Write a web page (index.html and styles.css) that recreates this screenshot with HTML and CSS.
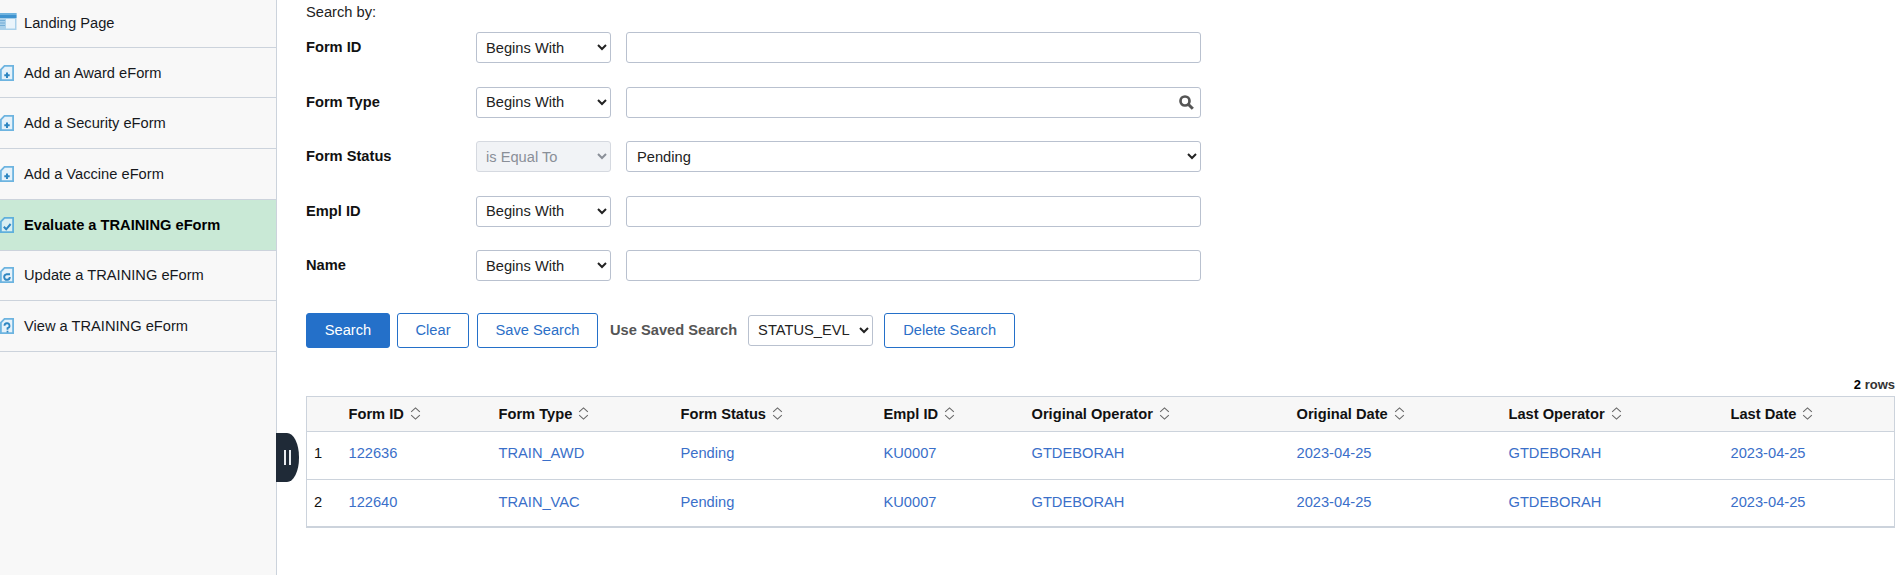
FILE: index.html
```html
<!DOCTYPE html>
<html lang="en">
<head>
<meta charset="utf-8">
<title>Evaluate a TRAINING eForm</title>
<link rel="stylesheet" href="styles.css">
</head>
<body>
<div class="page">
  <nav class="side">
    <a class="nav first"><svg class="ico land" viewBox="0 0 17 17"><rect x="0" y="0" width="16.500" height="17" fill="#a9d0ea"/><rect x="0" y="0" width="16.500" height="2" fill="#6fb3df"/><rect x="0" y="2" width="16.500" height="3" fill="#3f93cf"/><rect x="6" y="6" width="9" height="9.500" fill="#eaf4fb"/><path d="M0 7.500h5M0 10h5M0 12.500h5" stroke="#74add6"/></svg><span>Landing Page</span></a>
    <a class="nav"><svg class="ico" viewBox="0 0 14 16"><path d="M4.500 .9h8.600v14.200H.9V4.500z" fill="#e6f2fa" stroke="#6db4e0" stroke-width="1.800"/><path d="M7 7.500v5.500M4.300 10.300h5.400" stroke="#2e86c1" stroke-width="2"/></svg><span>Add an Award eForm</span></a>
    <a class="nav"><svg class="ico" viewBox="0 0 14 16"><path d="M4.500 .9h8.600v14.200H.9V4.500z" fill="#e6f2fa" stroke="#6db4e0" stroke-width="1.800"/><path d="M7 7.500v5.500M4.300 10.300h5.400" stroke="#2e86c1" stroke-width="2"/></svg><span>Add a Security eForm</span></a>
    <a class="nav"><svg class="ico" viewBox="0 0 14 16"><path d="M4.500 .9h8.600v14.200H.9V4.500z" fill="#e6f2fa" stroke="#6db4e0" stroke-width="1.800"/><path d="M7 7.500v5.500M4.300 10.300h5.400" stroke="#2e86c1" stroke-width="2"/></svg><span>Add a Vaccine eForm</span></a>
    <a class="nav active"><svg class="ico" viewBox="0 0 14 16"><path d="M4.500 .9h8.600v14.200H.9V4.500z" fill="#d8eff2" stroke="#5fb0dc" stroke-width="1.800"/><path d="M3.800 9.800l2.400 2.500 4.400-5.300" fill="none" stroke="#2e86c1" stroke-width="2"/></svg><span>Evaluate a TRAINING eForm</span></a>
    <a class="nav"><svg class="ico" viewBox="0 0 14 16"><path d="M4.500 .9h8.600v14.200H.9V4.500z" fill="#e6f2fa" stroke="#6db4e0" stroke-width="1.800"/><path d="M10 7.300H6.300a2.800 2.800 0 1 0 3.500 2.700" fill="none" stroke="#2e86c1" stroke-width="1.900"/></svg><span>Update a TRAINING eForm</span></a>
    <a class="nav"><svg class="ico" viewBox="0 0 14 16"><path d="M4.500 .9h8.600v14.200H.9V4.500z" fill="#e6f2fa" stroke="#6db4e0" stroke-width="1.800"/><path d="M4.500 7.800a2.500 2.500 0 1 1 3 2.400v1.500M7.500 12.800v1.700" fill="none" stroke="#2e86c1" stroke-width="1.800"/></svg><span>View a TRAINING eForm</span></a>
    <button class="handle" type="button" aria-label="Collapse"><i></i><i></i></button>
  </nav>
  <main class="main">
    <div class="search-by">Search by:</div>
    <div class="form">
      <label class="lbl">Form ID</label>
      <select class="sel"><option>Begins With</option></select>
      <input class="field" type="text">
      <label class="lbl">Form Type</label>
      <select class="sel"><option>Begins With</option></select>
      <div class="lookup"><input class="field" type="text"><svg class="mag" viewBox="0 0 15 15"><circle cx="6" cy="6" r="4.500" fill="none" stroke="#555" stroke-width="2.700"/><path d="M9.500 9.500l4.300 4.300" stroke="#555" stroke-width="3"/></svg></div>
      <label class="lbl">Form Status</label>
      <select class="sel" disabled><option>is Equal To</option></select>
      <select class="field"><option>Pending</option></select>
      <label class="lbl">Empl ID</label>
      <select class="sel"><option>Begins With</option></select>
      <input class="field" type="text">
      <label class="lbl">Name</label>
      <select class="sel"><option>Begins With</option></select>
      <input class="field" type="text">
    </div>
    <div class="actions">
      <button class="btn primary" type="button">Search</button>
      <button class="btn clear" type="button">Clear</button>
      <button class="btn save" type="button">Save Search</button>
      <span class="use">Use Saved Search</span>
      <select class="saved"><option>STATUS_EVL</option></select>
      <button class="btn del" type="button">Delete Search</button>
    </div>
    <div class="count"><b>2</b> rows</div>
    <table class="grid">
      <colgroup><col class="c0"><col class="c1"><col class="c2"><col class="c3"><col class="c4"><col class="c5"><col class="c6"><col class="c7"><col></colgroup>
      <thead>
        <tr>
          <th></th>
          <th>Form ID<svg class="sort" viewBox="0 0 10 12"><path d="M1 4.500L5 .8l4 3.700M1 7.500l4 3.700 4-3.700" fill="none" stroke="#666"/></svg></th>
          <th>Form Type<svg class="sort" viewBox="0 0 10 12"><path d="M1 4.500L5 .8l4 3.700M1 7.500l4 3.700 4-3.700" fill="none" stroke="#666"/></svg></th>
          <th>Form Status<svg class="sort" viewBox="0 0 10 12"><path d="M1 4.500L5 .8l4 3.700M1 7.500l4 3.700 4-3.700" fill="none" stroke="#666"/></svg></th>
          <th>Empl ID<svg class="sort" viewBox="0 0 10 12"><path d="M1 4.500L5 .8l4 3.700M1 7.500l4 3.700 4-3.700" fill="none" stroke="#666"/></svg></th>
          <th>Original Operator<svg class="sort" viewBox="0 0 10 12"><path d="M1 4.500L5 .8l4 3.700M1 7.500l4 3.700 4-3.700" fill="none" stroke="#666"/></svg></th>
          <th>Original Date<svg class="sort" viewBox="0 0 10 12"><path d="M1 4.500L5 .8l4 3.700M1 7.500l4 3.700 4-3.700" fill="none" stroke="#666"/></svg></th>
          <th>Last Operator<svg class="sort" viewBox="0 0 10 12"><path d="M1 4.500L5 .8l4 3.700M1 7.500l4 3.700 4-3.700" fill="none" stroke="#666"/></svg></th>
          <th>Last Date<svg class="sort" viewBox="0 0 10 12"><path d="M1 4.500L5 .8l4 3.700M1 7.500l4 3.700 4-3.700" fill="none" stroke="#666"/></svg></th>
        </tr>
      </thead>
      <tbody>
        <tr><td class="idx">1</td><td><a>122636</a></td><td><a>TRAIN_AWD</a></td><td><a>Pending</a></td><td><a>KU0007</a></td><td><a>GTDEBORAH</a></td><td><a>2023-04-25</a></td><td><a>GTDEBORAH</a></td><td><a>2023-04-25</a></td></tr>
        <tr><td class="idx">2</td><td><a>122640</a></td><td><a>TRAIN_VAC</a></td><td><a>Pending</a></td><td><a>KU0007</a></td><td><a>GTDEBORAH</a></td><td><a>2023-04-25</a></td><td><a>GTDEBORAH</a></td><td><a>2023-04-25</a></td></tr>
      </tbody>
    </table>
  </main>
</div>
</body>
</html>
```

FILE: styles.css
```css
* { box-sizing: border-box; }
html, body { margin: 0; height: 100%; overflow: hidden; background: #fff; }
body { font-family: "Liberation Sans", Arial, sans-serif; font-size: 14.670px; color: #111; }
.page { display: flex; height: 575px; width: 1895px; }

.side { position: relative; flex: 0 0 277px; background: #f8f8f8; border-right: 1px solid #ccd3dc; }
.nav { display: flex; align-items: center; height: 50.700px; padding-left: 24px; border-bottom: 1px solid #ccd3dc; color: #16181d; position: relative; overflow: hidden; }
.nav.first { height: 47.800px; }
.nav.active { background: #c9e9d6; font-weight: 700; color: #000; }
.ico { position: absolute; left: 0; top: 50%; width: 14px; height: 16px; margin-top: -8px; }
.land { width: 17px; height: 17px; margin-top: -10px; }
.handle { position: absolute; left: 276px; top: 433px; width: 23px; height: 49px; padding: 0; border: 0; background: #1f2a37; border-radius: 0 12px 12px 0 / 0 24px 24px 0; display: flex; align-items: center; justify-content: center; gap: 3px; }
.handle i { display: block; width: 2px; height: 15px; background: #e8ebef; }

.main { flex: 1; min-width: 0; padding: 4px 0 0 29px; }
.search-by { height: 28px; line-height: 17px; color: #222; }
.form { display: grid; grid-template-columns: 170px 150px 575px; grid-auto-rows: 54.500px; width: 895px; }
.form > * { align-self: start; }
.lbl { font-weight: 700; line-height: 17px; padding-top: 7px; color: #111; }
.sel, .field, .saved { font: inherit; height: 31px; background: #fff; border: 1px solid #b9c1cf; border-radius: 3px; color: #222; }
.sel { width: 135px; padding: 0 0 0 5px; }
.sel:disabled { background: #f1f3f6; color: #8a8f98; opacity: 1; border-color: #d5d9e0; }
.field { width: 575px; padding: 0 6px; display: block; }
.lookup { position: relative; width: 575px; }
.mag { position: absolute; right: 7px; top: 8px; width: 15px; height: 15px; }
.actions { display: flex; align-items: center; margin-top: 8px; height: 35px; }
.btn { font: inherit; height: 35px; padding: 0; border-radius: 3px; background: #fff; border: 1px solid #2470c9; color: #2c6fc7; }
.primary { width: 84px; background: #2470c9; color: #fff; }
.clear { width: 72px; margin-left: 7px; }
.save { width: 121px; margin-left: 8px; }
.use { margin-left: 12px; font-weight: 700; color: #555; white-space: nowrap; }
.saved { margin-left: 11px; width: 125px; padding: 0 0 0 5px; }
.del { width: 131px; margin-left: 11px; }
.count { margin-top: 29px; height: 19px; text-align: right; font-size: 13px; font-weight: 700; line-height: 16px; color: #333; }
.count b { color: #000; }
.grid { width: 1589px; table-layout: fixed; border-collapse: collapse; border: 1px solid #ccd3dc; border-bottom-width: 2px; }
.c0 { width: 42px; } .c1 { width: 150px; } .c2 { width: 182px; } .c3 { width: 203px; } .c4 { width: 148px; } .c5 { width: 265px; } .c6 { width: 212px; } .c7 { width: 222px; }
.grid th { height: 35px; padding: 0; text-align: left; background: #f7f7f7; font-weight: 700; border-bottom: 1px solid #ccd3dc; color: #111; }
.grid td { height: 48px; padding: 0 0 5px; border-bottom: 1px solid #ccd3dc; }
.grid tr:last-child td { border-bottom: 0; padding-bottom: 2px; }
.grid a { color: #3a6fc9; }
.grid .idx { padding-left: 7px; }
.sort { width: 11px; height: 13px; margin-left: 6px; vertical-align: -1px; }
```
